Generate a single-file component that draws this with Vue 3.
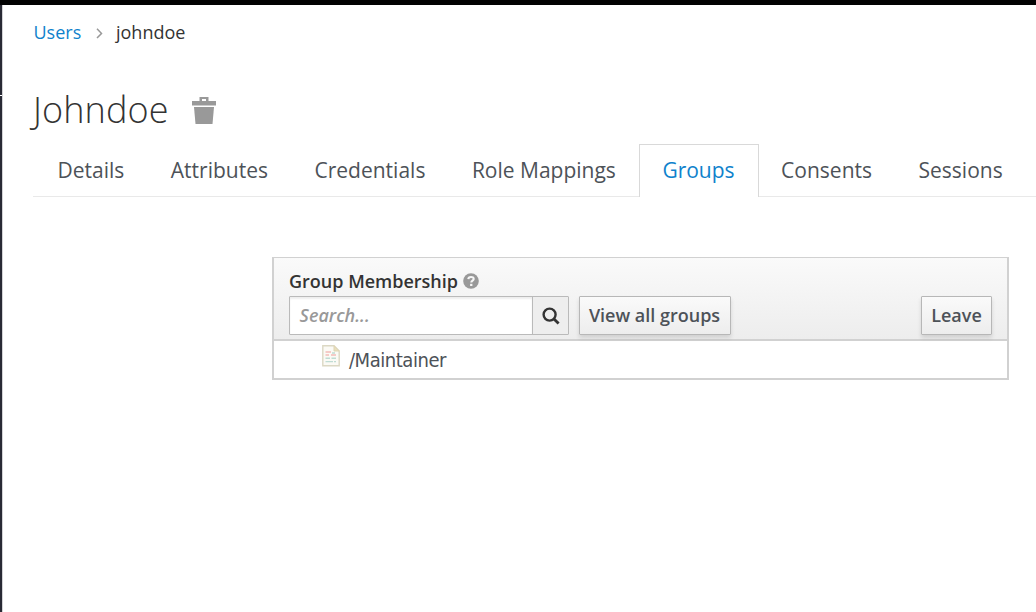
<script setup>
const tabs = ['Details', 'Attributes', 'Credentials', 'Role Mappings', 'Groups', 'Consents', 'Sessions']
const active = 'Groups'
const groups = ['/Maintainer']
</script>

<template>
  <div class="page">
    <div class="rail"></div>
    <main class="content">
      <nav class="breadcrumb">
        <a class="crumb-link">Users</a>
        <svg class="chevron" width="7" height="11" viewBox="0 0 7 11"><path d="M1 .8 5.5 5.4 1 10" fill="none" stroke="#999" stroke-width="1.5" /></svg>
        <span class="crumb-current">johndoe</span>
      </nav>
      <header class="heading">
        <h1>Johndoe</h1>
        <svg class="trash" width="24" height="28" viewBox="0 0 24 28" fill="#999">
          <path fill-rule="evenodd" d="M7.5 4V0H16.5V4H24V8.5H0V4ZM10 4H14V2H10Z" />
          <path d="M2 10H22L20.5 27H3.5Z" />
        </svg>
      </header>
      <ul class="tabs">
        <li v-for="t in tabs" :key="t" :class="['tab', { active: t === active }]"><span>{{ t }}</span></li>
      </ul>
      <section class="panel">
        <div class="panel-head">
          <div class="label">
            <span>Group Membership</span>
            <svg class="help" width="16" height="16" viewBox="0 0 16 16">
              <circle cx="8" cy="8" r="7.8" fill="#999" />
              <path d="M5.3 6.1C5.5 3.3 10.7 3.2 10.7 6C10.7 7.7 8.3 7.7 8.3 9.6" fill="none" stroke="#f6f6f6" stroke-width="2.1" />
              <rect x="7.1" y="10.8" width="2.3" height="2.2" fill="#f6f6f6" />
            </svg>
          </div>
          <div class="toolbar">
            <div class="search">
              <div class="input">Search...</div>
              <div class="search-btn">
                <svg width="18" height="18" viewBox="0 0 18 18" fill="none" stroke="#333"><circle cx="7.6" cy="7.6" r="6" stroke-width="2.4" /><path d="m12 12 4.6 4.6" stroke-width="2.8" /></svg>
              </div>
            </div>
            <button class="btn view">View all groups</button>
            <button class="btn leave">Leave</button>
          </div>
        </div>
        <div v-for="g in groups" :key="g" class="row">
          <svg class="doc" width="18" height="22" viewBox="0 0 18 22">
            <path d="M.8.8H12L17.2 6V20.7H.8Z" fill="#fbfaf5" stroke="#dcd8c4" stroke-width="1.4" />
            <path d="M12 .8V6H17.2Z" fill="#e9dfbd" stroke="#dfd5b4" />
            <path d="M3.5 7H9M3.5 10H7M9 10H14" stroke="#f3bcb8" stroke-width="1.4" />
            <path d="M10 8H13M3.5 13.3H8M9.5 13.3H14M3.5 16.6H11M12 16.6H14" stroke="#bfdcd3" stroke-width="1.4" />
          </svg>
          <span class="group-name">{{ g }}</span>
        </div>
      </section>
    </main>
  </div>
</template>

<style>
body { margin: 0; background: #fff; overflow: hidden; }
</style>

<style scoped>
* { box-sizing: border-box; }
.page {
  display: flex;
  width: 1036px;
  height: 612px;
  overflow: hidden;
  border-top: 5px solid #020202;
  background: #fff;
  color: #333;
  font-family: "Open Sans", sans-serif;
}
.rail {
  flex: none;
  width: 3px;
  border-right: 1px solid #d3d3d6;
  background: linear-gradient(#292a35 90px, #fff 90px, #fff 91px, #292a35 91px);
}
.content { flex: none; width: 1033px; padding-left: 30px; }
.breadcrumb {
  display: flex;
  align-items: center;
  height: 26px;
  margin-top: 14px;
  padding-left: .5px;
  font-size: 18px;
}
.crumb-link { width: 47.5px; color: #0f82cc; }
.chevron { margin: 2px 13px 0 15px; }
.heading { display: flex; height: 99px; padding-top: 39px; }
h1 {
  width: 159px;
  margin: 0;
  font-size: 36px;
  font-weight: 300;
  line-height: 52px;
  letter-spacing: .1px;
}
.trash { margin-top: 13px; }
.tabs {
  display: flex;
  width: 1010px;
  height: 53px;
  margin: 0;
  padding: 0 0 0 1.3px;
  border-bottom: 1px solid #e9e9e9;
  list-style: none;
}
.tab {
  flex: none;
  height: 53px;
  padding: 0 22.25px;
  border: 1px solid transparent;
  border-bottom: 0;
  color: #4d5258;
  font-size: 21px;
  line-height: 51px;
}
.tab.active {
  margin-right: -.7px;
  padding-right: 22.95px;
  border-color: #d9d9d9;
  background: #fff;
  color: #0f82cc;
}
.panel {
  width: 737px;
  margin: 60px 0 0 239px;
  border: 2px solid #d1d1d1;
  border-top-width: 1px;
}
.panel-head {
  height: 83px;
  padding: 9px 15px 0;
  border-bottom: 2px solid #d1d1d1;
  background: linear-gradient(#fafafa, #ededed);
}
.label {
  display: flex;
  align-items: center;
  height: 27px;
  margin-bottom: 2px;
  font-size: 18px;
  font-weight: 600;
}
.help { margin-left: 5px; }
.toolbar { display: flex; height: 39px; }
.search { display: flex; width: 280px; border: 1px solid #bababa; border-radius: 1px; }
.input {
  width: 242px;
  padding-left: 9.6px;
  background: #fff;
  box-shadow: inset 0 2px 2px rgba(0, 0, 0, .07);
  color: #999;
  font-size: 18px;
  font-style: italic;
  font-weight: 600;
  line-height: 37px;
}
.search-btn {
  display: flex;
  flex: 1;
  align-items: center;
  justify-content: center;
  padding-top: 1px;
  border-left: 1px solid #bababa;
  background: #eee;
}
.btn {
  padding: 0 1px 1px 0;
  border: 1px solid #b7b7b7;
  border-radius: 1px;
  background: linear-gradient(#fafafa, #ededed);
  box-shadow: 0 3px 4px rgba(3, 3, 3, .12);
  color: #4d5258;
  font: 600 18px/36px "Open Sans", sans-serif;
}
.view { width: 152px; margin-left: 10px; }
.leave { width: 71px; margin-left: auto; padding-right: 0; }
.row { display: flex; height: 37px; padding-left: 48px; }
.doc { margin-top: 4px; }
.group-name {
  margin-left: 9px;
  color: #4d5258;
  font-family: "DejaVu Sans Condensed", "DejaVu Sans", sans-serif;
  font-size: 20px;
  font-stretch: condensed;
  letter-spacing: -.45px;
  line-height: 38px;
}
</style>
